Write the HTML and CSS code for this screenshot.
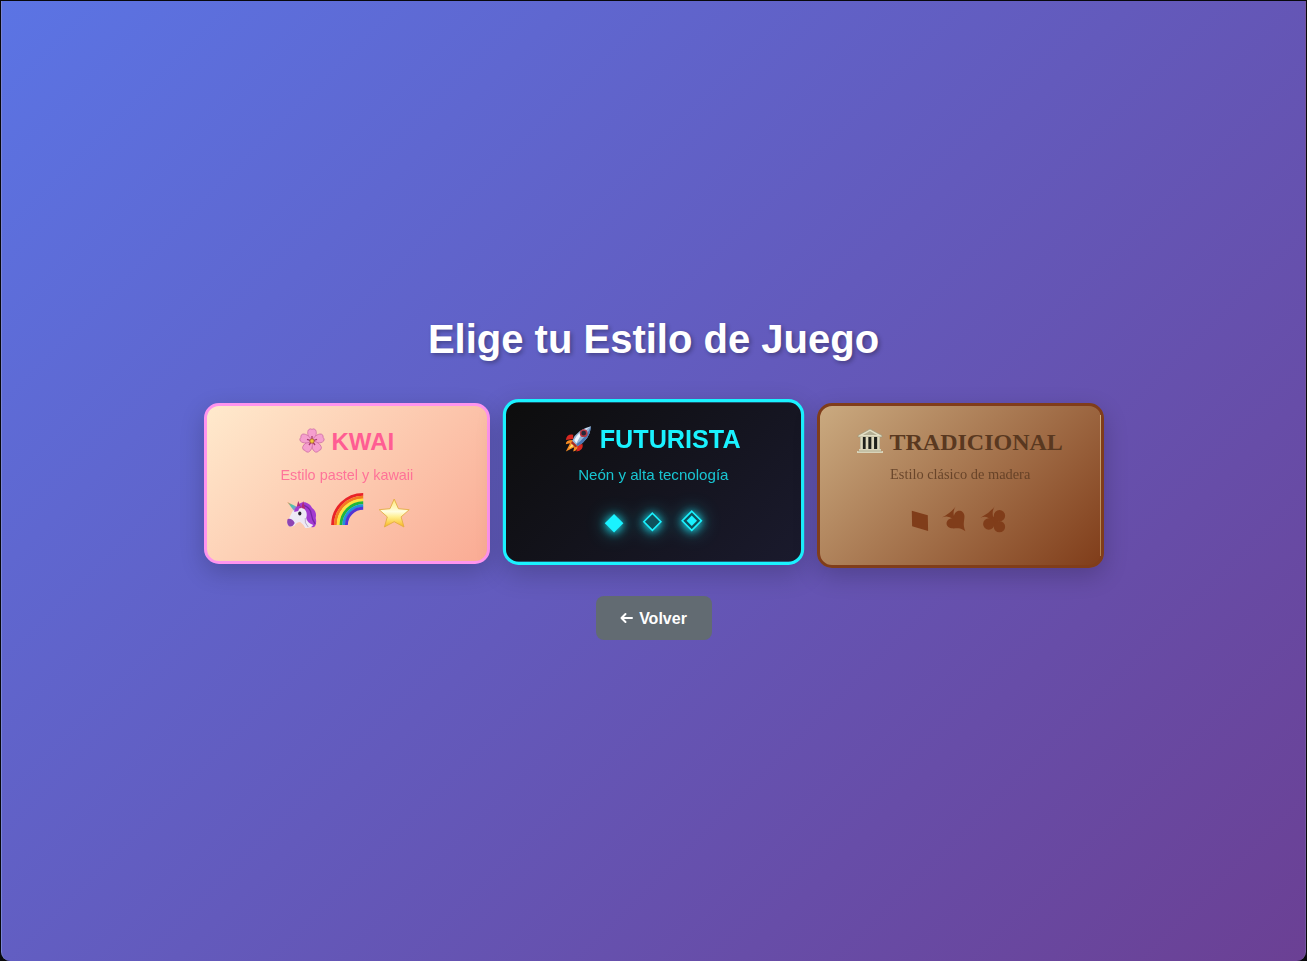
FILE: index.html
```html
<!DOCTYPE html>
<html lang="es">
<head>
<meta charset="utf-8">
<title>Elige tu Estilo de Juego</title>
<link rel="stylesheet" href="styles.css">
</head>
<body>
<main class="screen">
  <h1 class="title">Elige tu Estilo de Juego</h1>
  <div class="cards">
    <section class="card kwai">
      <h2 class="name">
        <svg class="emoji" viewBox="0 0 26 26">
          <g fill="#f59fce" stroke="#cb6aa2" stroke-width=".7">
            <path id="petal" d="M13 13C10 11 7.500 5.500 9.300 2Q11 0 13 1.300Q15 0 16.700 2C18.500 5.500 16 11 13 13Z"/>
            <use href="#petal" transform="rotate(72 13 13)"/><use href="#petal" transform="rotate(144 13 13)"/>
            <use href="#petal" transform="rotate(216 13 13)"/><use href="#petal" transform="rotate(288 13 13)"/>
          </g>
          <path d="M13 13V8M13 13l5-1.600M13 13l3 4M13 13l-3 4M13 13l-5-1.600" stroke="#a83a70" stroke-width="1.300"/>
          <circle cx="13" cy="13" r="2.200" fill="#f3ca3a" stroke="#a5602c" stroke-width=".8"/>
        </svg>
        <span>KWAI</span>
      </h2>
      <p class="desc">Estilo pastel y kawaii</p>
      <svg class="pieces" viewBox="226.8 491 240 44">
        <defs>
          <linearGradient id="gold" x2="0" y2="1"><stop stop-color="#ffe873"/><stop offset=".45" stop-color="#fffde0"/><stop offset=".65" stop-color="#ffee8c"/><stop offset="1" stop-color="#f8b51e"/></linearGradient>
          <linearGradient id="horn" x2="1" y2="1"><stop stop-color="#e98643"/><stop offset=".45" stop-color="#45c8b2"/><stop offset="1" stop-color="#b56ae0"/></linearGradient>
        </defs>
        <path d="M299 504C303 500 310 503 312 508Q317 512 315.500 518Q317 524 314 527Q309 528 306 523L298 510Z" fill="#a33bd1"/>
        <path d="M303 505Q310 507 311 514Q312 520 315 524" fill="none" stroke="#7625a5" stroke-width="1.300"/>
        <path d="M292.500 511Q297 505 303 508Q308 512 306 518Q307 523 313 525Q311 528.500 305 528Q303 524 300 522Q296 522 294.500 525.500Q290 528 287.500 525Q286.500 522 289 518Z" fill="#eee9f5"/>
        <path d="M305 518Q304 523 308 527" fill="none" stroke="#b7aec8" stroke-width="1"/>
        <path d="M287.500 519Q292 518 294.500 523Q292 528 288.500 526Q286 523 287.500 519Z" fill="#8e45b3"/>
        <path d="M287 502L297 507L294 511Z" fill="url(#horn)"/>
        <path d="M296 509L298 501L301 508ZM301 508L303 501L305 509Z" fill="#b02877"/>
        <path d="M294 512Q295 505 300 506L298 511Z" fill="#a33bd1"/>
        <ellipse cx="299.600" cy="513.500" rx="1.600" ry="1.900" fill="#25202d"/>
        <g fill="none" stroke-width="2.900">
          <path d="M332.400 525A30.600 30.600 0 0 1 363 494.400" stroke="#e92328"/>
          <path d="M335.200 525A27.800 27.800 0 0 1 363 497.200" stroke="#f47a21"/>
          <path d="M338 525A25 25 0 0 1 363 500" stroke="#ffe23d"/>
          <path d="M340.800 525A22.200 22.200 0 0 1 363 502.800" stroke="#20b83a"/>
          <path d="M343.600 525A19.400 19.400 0 0 1 363 505.600" stroke="#2094dc"/>
          <path d="M346.200 525A16.800 16.800 0 0 1 363 508.200" stroke="#5235d4"/>
        </g>
        <path d="M394 499L398.200 508.700L409 509.700L400.900 516.900L403.800 527L394 521.700L384.200 527L387.100 516.900L379 509.700L389.800 508.700Z" fill="url(#gold)" stroke="#e3ad45" stroke-width=".9" stroke-linejoin="round"/>
      </svg>
    </section>
    <section class="card futurista">
      <h2 class="name">
        <svg class="emoji" viewBox="0 0 26 26">
          <path d="M8 9Q2 8 1 14L8 13ZM17 18Q18 24 11 25L12 18Z" fill="#d92720"/>
          <path d="M7 14Q1 14 1 18L5 17L1 25L9 21L8 25Q13 24 12 18Z" fill="#f48a22"/>
          <path d="M7 17L4 22L10 19Z" fill="#ffe36d"/>
          <path d="M7 15Q11 4 25 1Q24 14 12 20Z" fill="#96b4d5"/>
          <path d="M9 14Q14 5 25 1Q18 4 11 17Z" fill="#edf5ff"/>
          <path d="M11 18Q20 12 25 1Q24 14 12 20Z" fill="#4a78b4"/>
          <path d="M7 15L12 20L10 21L6 17Z" fill="#a62c25"/>
          <circle cx="18" cy="7.500" r="3" fill="#26283b" stroke="#b53742" stroke-width="1.500"/>
        </svg>
        <span>FUTURISTA</span>
      </h2>
      <p class="desc">Neón y alta tecnología</p>
      <svg class="pieces" viewBox="533.5 491.4 240 46.2">
        <g class="glow">
          <path d="M614.300 514L623.600 523.200L614.300 532.400L605 523.200Z" fill="#1af2ff"/>
          <path d="M652.600 513.200L661.100 521.700L652.600 530.200L644.100 521.700Z" fill="#0f515c" stroke="#1af2ff" stroke-width="1.600"/>
          <path d="M692 511.200L701.500 520.700L692 530.200L682.500 520.700Z" fill="#0f515c" stroke="#1af2ff" stroke-width="1.700"/>
          <path d="M692 515.500L697.200 520.700L692 525.900L686.800 520.700Z" fill="#1af2ff"/>
        </g>
      </svg>
    </section>
    <section class="card tradicional">
      <h2 class="name">
        <svg class="emoji" viewBox="0 0 26 26">
          <path d="M1 7.500L13 1L25 7.500V9H1Z" fill="#e2dfc5" stroke="#9c987b" stroke-width=".7"/>
          <path d="M6 7L13 3L20 7Z" fill="#b2ae93"/>
          <path d="M3 9H23V22H3Z" fill="#1e211c"/>
          <path d="M4.500 9V22M10 9V22M15.700 9V22M21.500 9V22" stroke="#ded9bd" stroke-width="2.700"/>
          <path d="M2 21H24V23H26V25H0V23H2Z" fill="#d9d4b9"/>
          <path d="M1 23H25" stroke="#999379" stroke-width=".6"/>
        </svg>
        <span>TRADICIONAL</span>
      </h2>
      <p class="desc">Estilo clásico de madera</p>
      <svg class="pieces" viewBox="840.2 491 240 48">
        <g transform="translate(810 390) scale(.3333)" fill="#803d1a">
          <path d="M306 362L354 376L355 423L307 409Z"/>
          <path d="M438 349Q427 366 434 383L429 387Q416 375 397 382Q421 371 438 349Z"/>
          <path d="M432 384C432 356 463 356 464 379C464 394 458 404 467 424C448 410 439 417 425 415C405 412 404 385 432 384Z"/>
          <path d="M555 349Q544 366 552 388L543 391Q532 375 512 383Q538 371 555 349Z"/>
          <path d="M545 382L566 376V410L537 402Z"/>
          <circle cx="569" cy="377" r="17"/><circle cx="569" cy="410" r="17"/><circle cx="537" cy="402" r="17"/>
        </g>
      </svg>
    </section>
  </div>
  <button class="back">
    <svg class="arrow" viewBox="0 0 13 12"><path d="M12 6H1.500M5.500 2L1.500 6L5.500 10"/></svg>
    <span>Volver</span>
  </button>
</main>
</body>
</html>
```
FILE: styles.css
```css
* { box-sizing: border-box; }
body { margin: 0; background: #08080c; font-family: "Liberation Sans", Arial, sans-serif; }
.screen {
  height: 960px; margin: 1px 1px 0; overflow: hidden;
  display: flex; flex-direction: column; align-items: center;
  padding-top: 315px;
  border-left: 1px solid #7984d6; border-right: 1px solid #7657a0;
  border-radius: 0 0 9px 9px;
  background: linear-gradient(135deg, #5b74e4 0%, #6b4094 100%);
}
.title { margin: 0; font-size: 40px; line-height: 46px; color: #fff; text-shadow: 2px 2px 4px rgba(0,0,0,.3); }
.cards { display: flex; align-items: flex-start; gap: 20px; width: 900px; height: 165px; margin-top: 41px; }
.card {
  flex: 1; min-width: 0; padding: 20px; border: 3px solid; border-radius: 15px;
  display: flex; flex-direction: column; align-items: center;
  box-shadow: 0 8px 25px rgba(0,0,0,.2);
}
.name { display: flex; align-items: center; gap: 7px; height: 30px; margin: 0; font-size: 24px; line-height: 30px; }
.name span { padding-top: 2px; }
.emoji { width: 26px; height: 26px; flex: none; margin-left: -1px; }
.desc { margin: 10px 0 7px; font-size: 14.4px; line-height: 18px; opacity: .8; }
.pieces { width: 240px; height: 44px; flex: none; overflow: visible; }
.kwai { height: 161px; border-color: #ff94ee; color: #ff5d93; background: linear-gradient(135deg, #ffeacd, #faab94); }
.futurista { height: 158px; transform: scale(1.05); border-color: #1af2ff; color: #1af2ff; background: linear-gradient(135deg, #0d0d0d, #1a1a2d); }
.futurista .pieces { width: 228.57px; }
.glow { filter: drop-shadow(0 1px 5px #1af2ff) drop-shadow(0 0 9px rgba(26,242,255,.4)); }
.tradicional { position: relative; height: 165px; border-color: #803d1a; color: #593820; font-family: "Liberation Serif", "Times New Roman", serif; background: linear-gradient(135deg, #caaa80, #803d1a); }
.tradicional::after { content: ""; position: absolute; top: 9px; right: 0; bottom: 9px; width: 1px; background: linear-gradient(#caaa80, #b1814f); }
.tradicional .desc { margin: 9px 0 8px; }
.tradicional .pieces { height: 48px; }
.back {
  display: flex; align-items: center; justify-content: center; gap: 6px;
  width: 116px; height: 44px; margin-top: 28px; padding: 0;
  border: 0; border-radius: 8px; background: #626b72; color: #fff;
  font: bold 16px/20px "Liberation Sans", Arial, sans-serif;
}
.back span { padding-top: 2px; }
.arrow { width: 13px; height: 12px; fill: none; stroke: #fff; stroke-width: 2; stroke-linecap: round; stroke-linejoin: round; }
```
